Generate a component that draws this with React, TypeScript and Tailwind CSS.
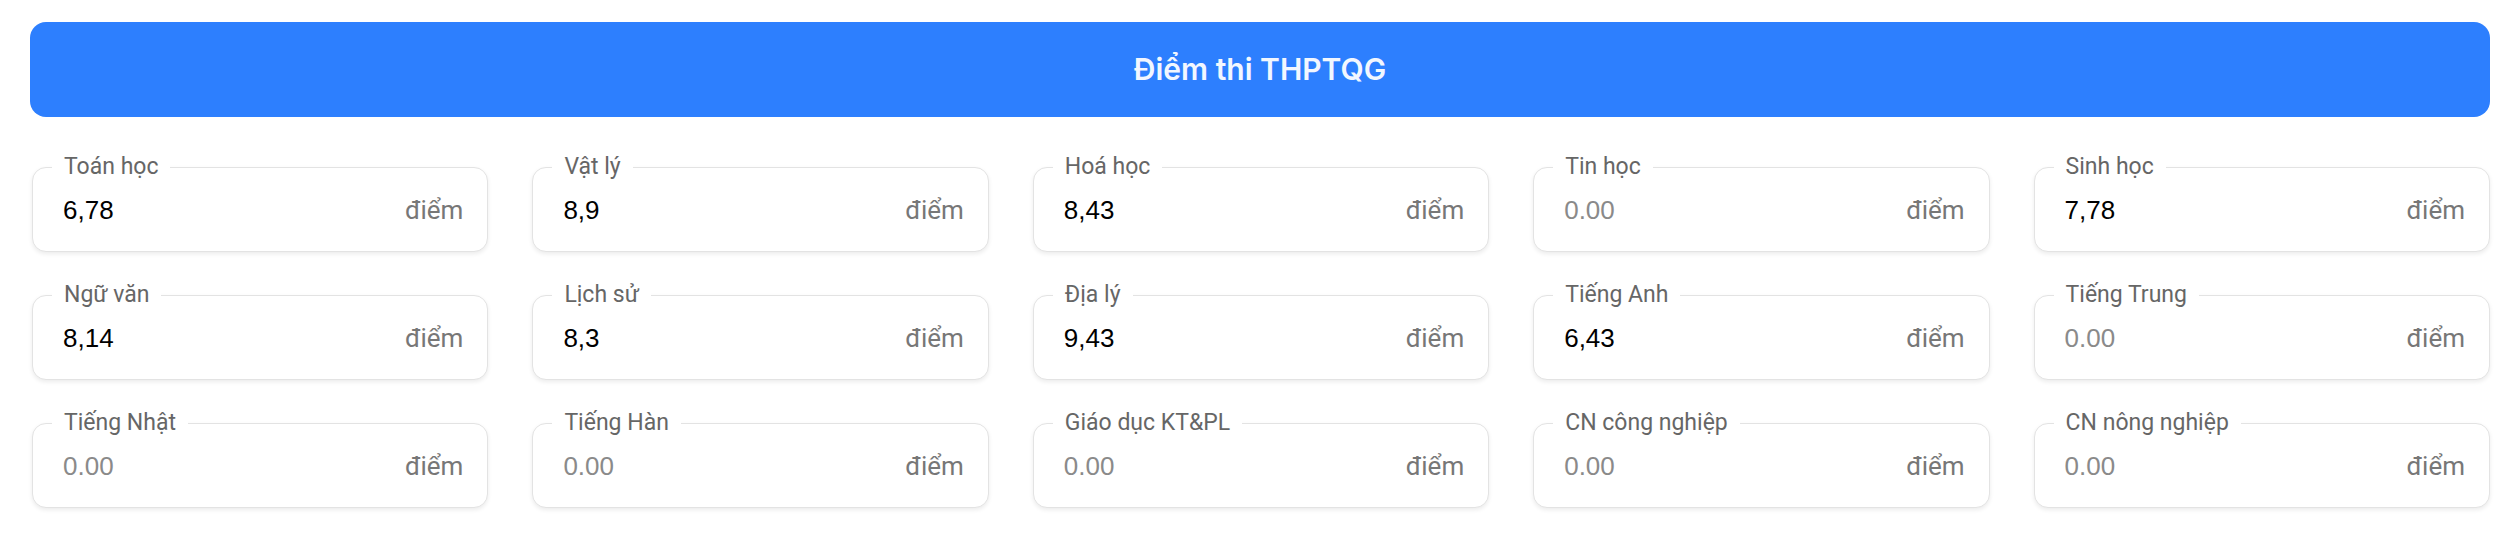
import * as React from "react"

type Subject = {
  label: string
  value?: string
}

const subjects: Subject[] = [
  { label: "Toán học", value: "6,78" },
  { label: "Vật lý", value: "8,9" },
  { label: "Hoá học", value: "8,43" },
  { label: "Tin học" },
  { label: "Sinh học", value: "7,78" },
  { label: "Ngữ văn", value: "8,14" },
  { label: "Lịch sử", value: "8,3" },
  { label: "Địa lý", value: "9,43" },
  { label: "Tiếng Anh", value: "6,43" },
  { label: "Tiếng Trung" },
  { label: "Tiếng Nhật" },
  { label: "Tiếng Hàn" },
  { label: "Giáo dục KT&PL" },
  { label: "CN công nghiệp" },
  { label: "CN nông nghiệp" },
]

function ScoreField({ subject }: { subject: Subject }) {
  return (
    <div className="relative h-[85px] rounded-[14px] border border-[#e3e3e3] bg-white shadow-[0_2px_4px_rgba(0,0,0,0.08)]">
      {/* Floating label */}
      <span className="absolute -top-[14px] left-[19px] bg-white px-[12px] font-['Roboto',sans-serif] text-[23px] leading-[26px] text-[#666666]">
        {subject.label}
      </span>

      <div className="flex h-full items-center justify-between pl-[30px] pr-[24px] pt-[1px]">
        <input
          type="text"
          defaultValue={subject.value}
          placeholder="0.00"
          className="w-full min-w-0 bg-transparent font-['Liberation_Sans',Arial,sans-serif] text-[26px] leading-[30px] text-black outline-none placeholder:text-[#8a8a8a]"
        />
        <span className="shrink-0 font-['Roboto',sans-serif] text-[26px] leading-[30px] text-[#777777]">
          điểm
        </span>
      </div>
    </div>
  )
}

export default function App() {
  return (
    <div className="min-h-screen bg-white pb-[28px] pl-[30px] pr-[26px] pt-[22px]">
      {/* Header */}
      <div className="flex h-[95px] items-center justify-center rounded-[16px] bg-[#2d7ffe]">
        <h1 className="font-['Inter',sans-serif] text-[30px] font-semibold text-[#f2f7ff]">
          Điểm thi THPTQG
        </h1>
      </div>

      {/* Score grid */}
      <div className="mt-[50px] grid grid-cols-5 gap-x-[44px] gap-y-[43px] pl-[2px]">
        {subjects.map((s) => (
          <ScoreField key={s.label} subject={s} />
        ))}
      </div>
    </div>
  )
}
